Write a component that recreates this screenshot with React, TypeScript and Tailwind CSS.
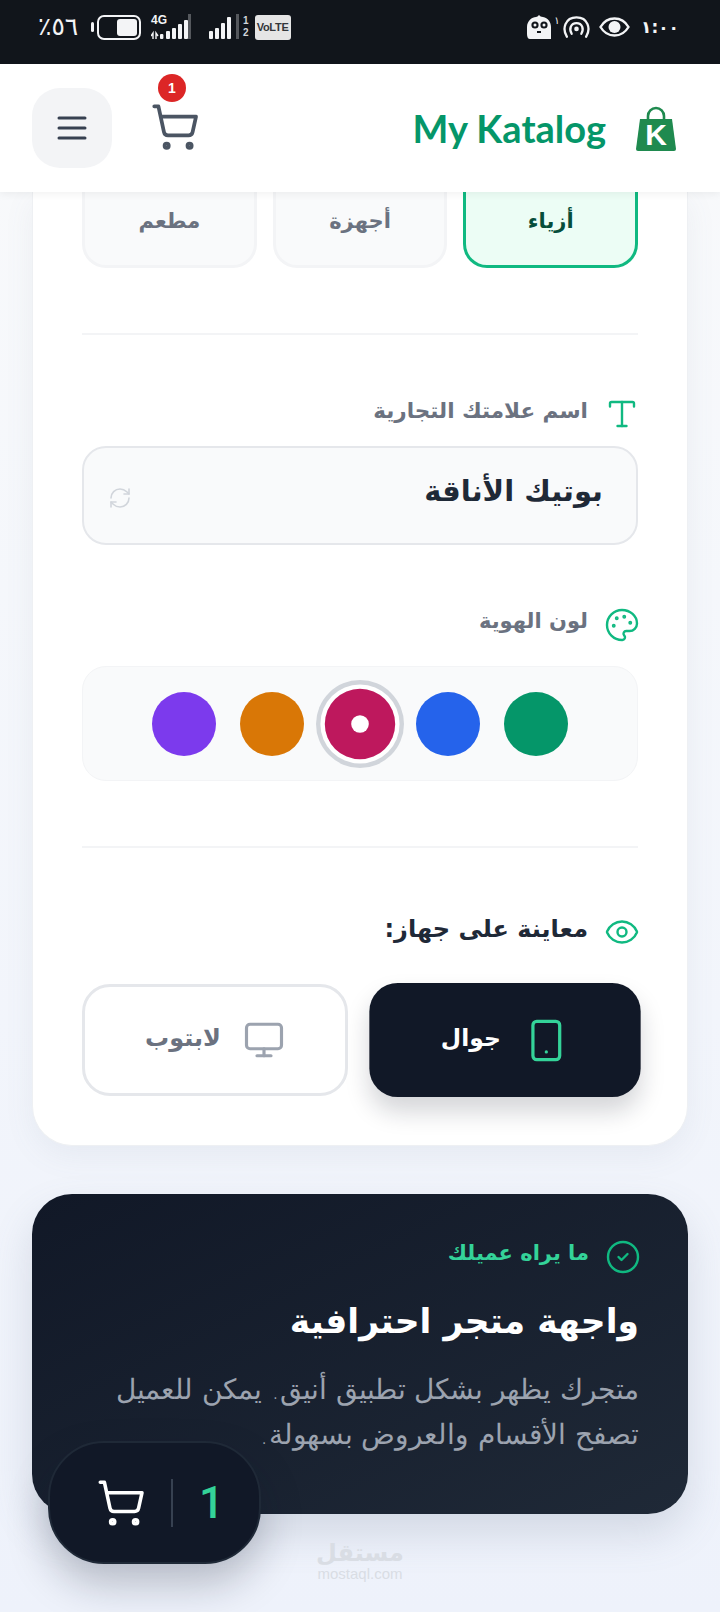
import { CircleCheck, Eye, Monitor, Palette, RefreshCw, ShoppingCart, Smartphone, Type } from 'lucide-react';
import type { ReactNode } from 'react';

const Signal = ({ bars, hasArrows }: { bars: number[]; hasArrows?: boolean }) => (
	<svg width={hasArrows ? 40 : 30} height="26" viewBox={hasArrows ? '0 0 40 26' : '0 0 30 26'}>
		{hasArrows && (
			<>
				<path d="M2 19v6M0 22l2-3v6M5 19v6M7 22l-2-3v6" stroke="#f3f4f6" strokeWidth="1.4" fill="none" />
				<rect x="9" y="20" width="3.4" height="5" rx="1" fill="#f3f4f6" />
			</>
		)}
		{bars.map((h, i) => (
			<rect key={i} x={(hasArrows ? 15 : 0) + i * 6} y={25 - h} width="4" height={h} rx="1" fill="#f3f4f6" />
		))}
		<rect x={hasArrows ? 37 : 27} y="0" width="3" height="25" fill="#55585d" />
	</svg>
);

const StatusBar = () => (
	<div dir="ltr" className="flex h-16 items-start justify-between bg-[#11151b] pl-[38px] pr-[45px] pt-[14px] text-[#f3f4f6]">
		<div className="flex items-center">
			<span dir="rtl" className="w-[50px] whitespace-nowrap text-left text-[25px] leading-[26px] tracking-[4px]">٥٦٪</span>
			<div className="ml-[3px] h-[10px] w-[3px] rounded-sm bg-[#f3f4f6]" />
			<div className="ml-[3px] flex h-[25px] w-[44px] items-center justify-end rounded-[7px] border-2 border-[#f3f4f6] pr-[2px]">
				<div className="h-[17px] w-[20px] rounded-[3px] bg-[#f3f4f6]" />
			</div>
			<div className="relative ml-[10px]">
				<span className="absolute left-0 top-0 font-['Liberation_Sans',sans-serif] text-[12px] font-bold leading-[12px]">4G</span>
				<Signal hasArrows bars={[8, 11, 15, 19]} />
			</div>
			<div className="ml-[18px]">
				<Signal bars={[8, 11, 16, 22]} />
			</div>
			<div className="ml-[4px] flex flex-col font-['Liberation_Sans',sans-serif] text-[10px] font-bold leading-[12px] text-[#d1d5db]">
				<span>1</span>
				<span>2</span>
			</div>
			<div className="ml-[6px] flex h-[25px] w-[36px] items-center justify-center rounded-[3px] bg-[#e5e5e5] font-['Liberation_Sans',sans-serif] text-[11px] font-bold tracking-tight text-[#33363a]">
				VoLTE
			</div>
		</div>
		<div className="flex items-center">
			<svg width="26" height="26" viewBox="0 0 26 26">
				<path d="M13 1c1 1 2 2 4 2 5 1 8 5 8 10v12H4c-2 0-3-2-3-5v-7C1 7 6 3 10 3c1 0 2-1 3-2z" fill="#f3f4f6" />
				<circle cx="9" cy="11" r="3.6" fill="#11151b" />
				<circle cx="18" cy="11" r="3.6" fill="#11151b" />
				<circle cx="9" cy="11" r="1.5" fill="#f3f4f6" />
				<circle cx="18" cy="11" r="1.5" fill="#f3f4f6" />
				<path d="M11 18h4" stroke="#11151b" strokeWidth="2" />
			</svg>
			<span className="-mt-[12px] w-[10px] text-center text-[10px] leading-none">١</span>
			<svg width="29" height="24" viewBox="0 0 30 24" fill="none" stroke="#f3f4f6" strokeWidth="2.4" strokeLinecap="round">
				<path d="M5 22C0 14 3 2 15 2s15 12 10 20" />
				<path d="M10 19c-3-5-1-11 5-11s8 6 5 11" />
				<circle cx="15" cy="14" r="2.4" fill="#f3f4f6" stroke="none" />
			</svg>
			<svg className="ml-[8px]" width="31" height="20" viewBox="0 0 31 20">
				<path d="M1.5 10C5 4 10 1.5 15.500 1.500S26 4 29.500 10C26 16 21 18.500 15.500 18.500S5 16 1.500 10z" fill="none" stroke="#f3f4f6" strokeWidth="2.4" />
				<circle cx="15.500" cy="10" r="6" fill="#f3f4f6" />
			</svg>
			<span dir="ltr" className="ml-[11px] w-[34px] text-[17px] font-bold leading-[26px] tracking-[1px]">١:٠٠</span>
		</div>
	</div>
);

const BagLogo = () => (
	<svg width="40" height="45" viewBox="0 0 40 45">
		<path d="M12 16V10a8 8 0 0 1 16 0v6" fill="none" stroke="#1f8a4f" strokeWidth="2.6" />
		<path d="M4 13h32l4 30a2 2 0 0 1-2 2H2a2 2 0 0 1-2-2z" fill="#1f8a4f" />
		<text x="20" y="39" textAnchor="middle" fill="#fff" fontSize="30" fontWeight="700" fontFamily="Liberation Sans, sans-serif">K</text>
	</svg>
);

const Header = () => (
	<header className="relative z-10 flex h-32 items-center justify-between bg-white pl-8 pr-[44px] shadow-[0_2px_8px_rgba(0,0,0,0.06)]">
		<div className="flex items-center gap-[30px]">
			<BagLogo />
			<span dir="ltr" className="font-['Lato',sans-serif] text-[38px] font-bold leading-none text-[#059669]">My Katalog</span>
		</div>
		<div dir="ltr" className="flex items-center gap-[38px]">
			<button className="flex h-20 w-20 items-center justify-center rounded-[28px] bg-[#f3f4f6]">
				<svg width="30" height="24" viewBox="0 0 30 24" stroke="#374151" strokeWidth="3" strokeLinecap="round">
					<path d="M2 2h26M2 12h26M2 22h26" />
				</svg>
			</button>
			<div className="relative -mt-[2px] h-[50px] w-[50px]">
				<ShoppingCart size={50} strokeWidth={1.8} className="text-[#4b5563]" />
				<span className="absolute -top-[28px] left-[8px] flex h-7 w-7 items-center justify-center rounded-full bg-[#dc2626] font-['Liberation_Sans',sans-serif] text-[14px] font-bold text-white">1</span>
			</div>
		</div>
	</header>
);

const Label = ({ icon, children, className }: { icon: ReactNode; children: ReactNode; className: string }) => (
	<div className="flex h-9 items-center gap-4">
		<span className="-mr-0.5 text-[#10b981]">{icon}</span>
		<span className={className}>{children}</span>
	</div>
);

const Pill = ({ label, active }: { label: string; active?: boolean }) => (
	<div className={active
		? 'flex h-[76px] items-center justify-center rounded-b-[24px] border-x-[3px] border-b-[3px] border-[#10b981] bg-[#ecfdf5] pb-[14px] text-[21px] font-bold text-[#064e3b]'
		: 'flex h-[76px] items-center justify-center rounded-b-[24px] border-x-[3px] border-b-[3px] border-[#f3f4f6] bg-[#f9fafb] pb-[14px] text-[21px] font-bold text-[#6b7280]'}>
		{label}
	</div>
);

const swatches = ['bg-[#059669]', 'bg-[#2563eb]', 'bg-[#be185d]', 'bg-[#d97706]', 'bg-[#7c3aed]'];

const SettingsCard = () => (
	<section className="rounded-b-[40px] border-x border-b border-[#eef0f3] bg-white px-[49px] pb-[49px] shadow-[0_10px_30px_rgba(100,116,139,0.08)]">
		<div className="grid grid-cols-3 gap-4">
			<Pill label="أزياء" active />
			<Pill label="أجهزة" />
			<Pill label="مطعم" />
		</div>
		<div className="mt-[65px] h-0.5 bg-[#f3f4f6]" />

		<div className="mt-[61px]">
			<Label icon={<Type size={36} strokeWidth={1.6} />} className="pb-1.5 text-[21.500px] font-bold text-[#6b7280]">اسم علامتك التجارية</Label>
		</div>
		<div className="mt-[14px] flex h-[99px] items-center justify-between rounded-[24px] border-2 border-[#e5e7eb] bg-[#f9fafb] pl-6 pr-[33px]">
			<span className="pb-2 text-[29px] font-bold text-[#1f2937]">بوتيك الأناقة</span>
			<RefreshCw size={24} strokeWidth={1.6} className="mt-1 text-[#d1d5db]" />
		</div>

		<div className="mt-[62px]">
			<Label icon={<Palette size={36} strokeWidth={1.6} />} className="pb-1.5 text-[21px] font-bold text-[#6b7280]">لون الهوية</Label>
		</div>
		<div dir="ltr" className="mt-[23px] flex h-[115px] flex-row-reverse items-center justify-center gap-6 rounded-[24px] border border-[#f3f4f6] bg-[#f9fafb]">
			{swatches.map((color, i) => (
				<div key={color} className={i === 2
					? `flex h-16 w-16 scale-110 items-center justify-center rounded-full ${color} shadow-[0_0_0_4px_#fff,0_0_0_8px_#d1d5db]`
					: `h-16 w-16 rounded-full ${color}`}>
					{i === 2 && <div className="h-4 w-4 rounded-full bg-white" />}
				</div>
			))}
		</div>
		<div className="mt-[65px] h-0.5 bg-[#f3f4f6]" />

		<div className="mt-[66px]">
			<Label icon={<Eye size={36} strokeWidth={1.6} />} className="pb-1.5 text-[24px] font-bold text-[#1f2937]">معاينة على جهاز:</Label>
		</div>
		<div className="mt-[34px] grid grid-cols-2 gap-6">
			<button className="flex h-[112px] scale-[1.02] items-center justify-center gap-[22px] rounded-[28px] bg-[#111827] text-[23px] font-bold text-white shadow-[0_14px_24px_rgba(17,24,39,0.18)]">
				<Smartphone size={45} strokeWidth={1.7} className="text-[#34d399]" />
				<span className="pb-1">جوال</span>
			</button>
			<button className="flex h-[112px] items-center justify-center gap-[22px] rounded-[28px] border-[3px] border-[#e5e7eb] bg-white text-[24px] font-bold text-[#6b7280]">
				<Monitor size={42} strokeWidth={1.8} className="text-[#9ca3af]" />
				<span className="pb-1">لابتوب</span>
			</button>
		</div>
	</section>
);

const PreviewCard = () => (
	<section className="mt-12 h-[320px] rounded-[40px] bg-gradient-to-br from-[#111827] to-[#1f2937] px-[49px] pt-[45px] shadow-[0_20px_40px_rgba(100,116,139,0.2)]">
		<Label icon={<CircleCheck size={36} strokeWidth={1.6} />} className="pb-1.5 text-[21px] font-bold text-[#34d399]">ما يراه عميلك</Label>
		<h2 className="mt-[22px] text-[34.500px] font-bold leading-[48px] text-white">واجهة متجر احترافية</h2>
		<p className="mt-[22px] text-[27.700px] font-light leading-[45px] text-[#9ca3af]">
			متجرك يظهر بشكل تطبيق أنيق. يمكن للعميل
			<br />
			تصفح الأقسام والعروض بسهولة.
		</p>
	</section>
);

const FloatingCart = () => (
	<div dir="ltr" className="absolute bottom-12 left-12 z-20 flex h-[123px] w-[213px] items-center rounded-[56px] border-2 border-[#1f2937] bg-[#111827] pl-[46px] shadow-[0_20px_40px_rgba(15,23,42,0.25)]">
		<ShoppingCart size={50} strokeWidth={1.7} className="text-white" />
		<div className="ml-[25px] h-12 w-0.5 bg-[#374151]" />
		<span className="ml-[26px] font-['Roboto',sans-serif] text-[44px] font-medium leading-none text-[#34d399]">1</span>
	</div>
);

export default function App() {
	return (
		<div dir="rtl" className="relative h-[1612px] w-[720px] overflow-hidden bg-gradient-to-b from-[#f9fafb] to-[#eef2fb] font-['DejaVu_Sans',sans-serif]">
			<StatusBar />
			<Header />
			<main className="px-8">
				<SettingsCard />
				<PreviewCard />
				<div className="mt-[26px] flex flex-col items-center text-[#d9dde4]">
					<span className="text-[24px] font-bold leading-[26px]">مستقل</span>
					<span className="font-['Liberation_Sans',sans-serif] text-[15px] leading-[15px]">mostaql.com</span>
				</div>
			</main>
			<FloatingCart />
		</div>
	);
}
